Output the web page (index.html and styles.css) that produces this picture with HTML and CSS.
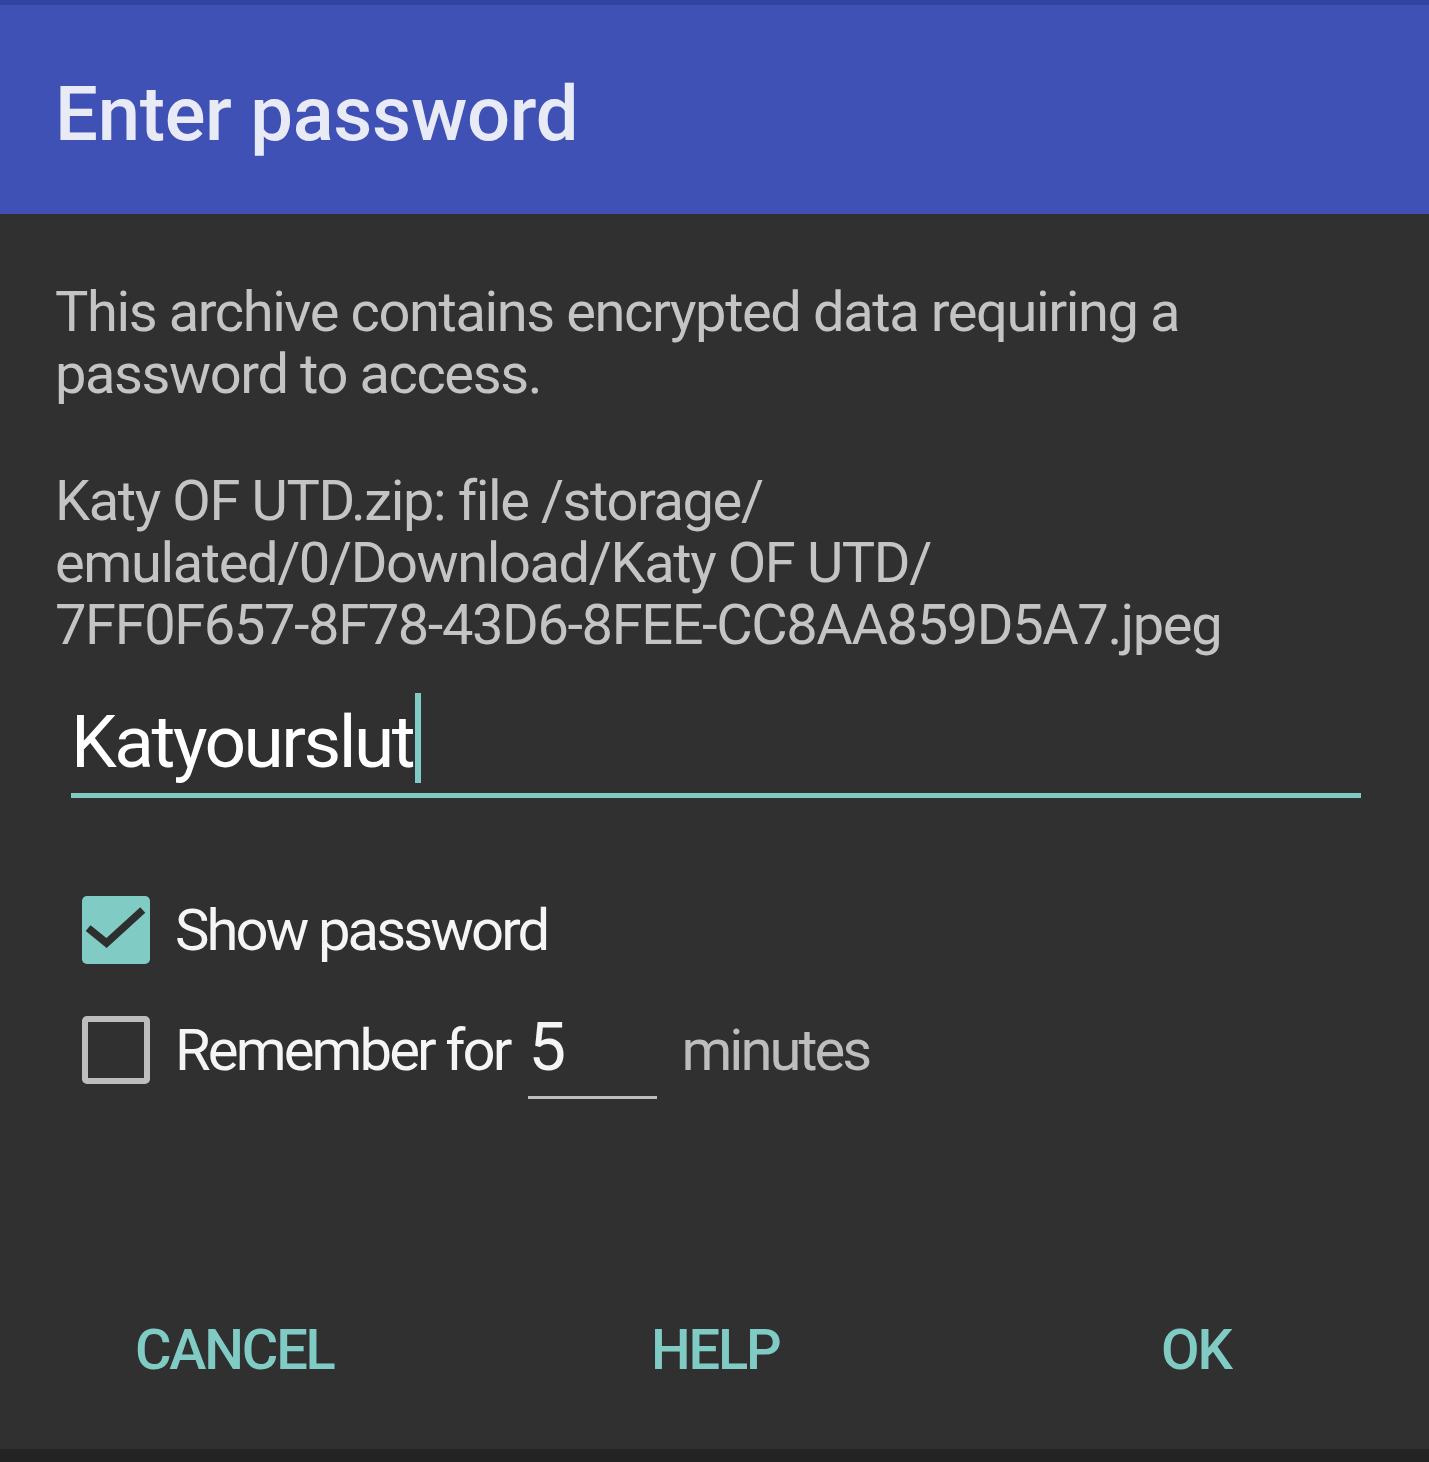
FILE: index.html
```html
<!DOCTYPE html>
<html lang="en">
<head>
    <meta charset="UTF-8">
    <meta name="viewport" content="width=device-width, initial-scale=1.0">
    <title>Enter password</title>
    <link rel="stylesheet" href="styles.css">
</head>
<body>
    <div class="dialog">
        <!-- Title bar -->
        <header class="dialog-title">
            <h1>Enter password</h1>
        </header>

        <div class="dialog-body">
            <p class="message">This archive contains encrypted data requiring a<br>password to access.</p>
            <p class="message message-file">Katy OF UTD.zip: file /storage/<br>emulated/0/Download/Katy OF UTD/<br>7FF0F657-8F78-43D6-8FEE-CC8AA859D5A7.jpeg</p>

            <!-- Password input -->
            <div class="password-field">
                <span class="password-text">Katyourslut</span><span class="cursor"></span>
            </div>

            <!-- Options -->
            <div class="check-row">
                <span class="checkbox checked">
                    <svg viewBox="0 0 68 68" width="68" height="68">
                        <path d="M9 34.5 L24.5 47 L58 16.5" fill="none" stroke="#2e2e2e" stroke-width="7.5" stroke-linecap="square" stroke-linejoin="miter"/>
                    </svg>
                </span>
                <span class="check-label">Show password</span>
            </div>
            <div class="check-row remember-row">
                <span class="checkbox"></span>
                <span class="check-label">Remember for</span>
                <span class="minutes-field">5</span>
                <span class="minutes-label">minutes</span>
            </div>
        </div>

        <!-- Buttons -->
        <div class="dialog-actions">
            <button type="button">CANCEL</button>
            <button type="button">HELP</button>
            <button type="button">OK</button>
        </div>
    </div>
    <div class="nav-strip"></div>
</body>
</html>
```

FILE: styles.css
```css
body {
    margin: 0;
    background-color: #232323;
    font-family: Roboto, "Noto Sans", Arial, sans-serif;
    width: 1429px;
    height: 1462px;
    overflow: hidden;
}

.dialog {
    background-color: #303030;
    height: 1449px;
}

.dialog-title {
    background-color: #3f51b5;
    border-top: 5px solid #3242a0;
    height: 209px;
    box-sizing: content-box;
}

.dialog-title h1 {
    margin: 0;
    padding: 71px 0 0 55px;
    font-size: 76px;
    line-height: 76px;
    font-weight: 500;
    letter-spacing: -0.3px;
    color: #e8eaf6;
}

.dialog-body {
    padding: 67px 68px 0 57px;
}

.message {
    margin: 0 0 0 -2px;
    font-size: 56px;
    line-height: 62px;
    letter-spacing: -1.4px;
    color: #c4c4c4;
}

.message-file {
    margin-top: 65px;
}

.password-field {
    display: flex;
    align-items: flex-start;
    margin: 37px 0 0 14px;
    padding-bottom: 2px;
    border-bottom: 5px solid #80cbc4;
}

.password-text {
    font-size: 73px;
    line-height: 98px;
    letter-spacing: -2.5px;
    color: #ffffff;
}

.cursor {
    width: 6px;
    height: 90px;
    margin-left: 2px;
    background-color: #80cbc4;
}

.check-row {
    display: flex;
    align-items: center;
    margin: 98px 0 0 25px;
}

.remember-row {
    margin-top: 37px;
}

.checkbox {
    width: 68px;
    height: 68px;
    box-sizing: border-box;
    border: 6px solid #bdbdbd;
    border-radius: 5px;
    flex-shrink: 0;
}

.checkbox.checked {
    border: none;
    background-color: #80cbc4;
}

.checkbox svg {
    display: block;
}

.check-label {
    margin-left: 25px;
    font-size: 58px;
    line-height: 68px;
    letter-spacing: -2.9px;
    color: #f5f5f5;
}

.minutes-field {
    width: 129px;
    margin-left: 19px;
    padding: 0 0 3px 0;
    box-sizing: border-box;
    border-bottom: 3px solid #bdbdbd;
    font-size: 67px;
    line-height: 92px;
    color: #f5f5f5;
}

.minutes-label {
    margin-left: 24px;
    font-size: 58px;
    line-height: 68px;
    letter-spacing: -3px;
    color: #bdbdbd;
}

.dialog-actions {
    display: grid;
    grid-template-columns: 516px 510px auto;
    margin-top: 201px;
    padding-left: 135px;
}

.dialog-actions button {
    justify-self: start;
    padding: 0;
    border: none;
    background: none;
    font-family: inherit;
    font-size: 56px;
    line-height: 100px;
    font-weight: 500;
    letter-spacing: -2.2px;
    color: #80cbc4;
}

.nav-strip {
    height: 13px;
    background-color: #232323;
}
```
